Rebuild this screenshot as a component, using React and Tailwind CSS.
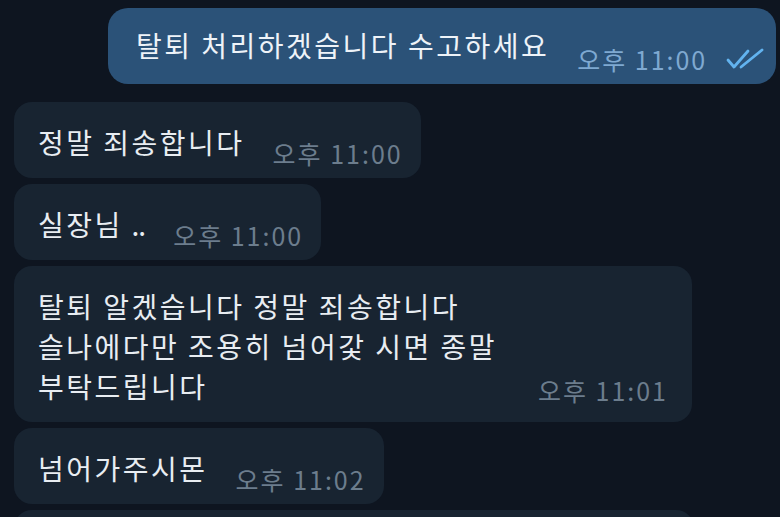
import React from "react";

const font = { fontFamily: '"Noto Sans CJK KR", "Noto Sans", sans-serif' };

function Time({ children, out }) {
  return (
    <span
      className={`text-[25px] leading-[30px] whitespace-nowrap tracking-[2px] ${out ? "text-[#7fa9d1]" : "text-[#6c7d8d]"}`}
    >
      {children}
    </span>
  );
}

function Bubble({ text, time }) {
  return (
    <div className="self-start flex items-end rounded-[18px] bg-[#182431] pl-6 pr-[18px] pt-[20px] pb-[9px]">
      <span className="text-[28px] leading-[40px] pb-[7px] text-[#e8edf2] whitespace-nowrap tracking-[2.5px]">
        {text}
      </span>
      <span className="ml-[28px]">
        <Time>{time}</Time>
      </span>
    </div>
  );
}

export default function App() {
  return (
    <div
      className="w-[780px] h-[517px] overflow-hidden bg-[#0e1520] flex flex-col pt-[8px]"
      style={font}
    >
      <div className="self-end mr-[4px] w-[668px] flex items-end rounded-[20px] bg-[#2b5278] pl-[28px] pt-[17px] pb-[9px]">
        <span className="text-[28px] leading-[40px] pb-[10px] text-[#eef3f8] whitespace-nowrap tracking-[2.5px]">
          탈퇴 처리하겠습니다 수고하세요
        </span>
        <span className="ml-[28px]">
          <Time out>오후 11:00</Time>
        </span>
        <svg
          className="ml-[18px] mb-[4px]"
          width="42"
          height="24"
          viewBox="0 0 42 24"
          fill="none"
          stroke="#62b3ef"
          strokeWidth="2.8"
          strokeLinecap="round"
          strokeLinejoin="round"
        >
          <path d="M3 13 L9 20 L23 4" />
          <path d="M16 20 L37 3" />
        </svg>
      </div>

      <div className="flex flex-col gap-[6px] pl-[14px] mt-[18px]">
        <Bubble text="정말 죄송합니다" time="오후 11:00" />
        <Bubble
          text={
            <>
              실장님 <span className="tracking-[-1px]">..</span>
            </>
          }
          time="오후 11:00"
        />
        <div className="self-start w-[678px] flex items-end rounded-[18px] bg-[#182431] pl-6 pr-6 pt-[20px] pb-[16px]">
          <div className="flex-1 text-[28px] leading-[40px] text-[#e8edf2] tracking-[2.5px]">
            <div>탈퇴 알겠습니다 정말 죄송합니다</div>
            <div>슬나에다만 조용히 넘어갗 시면 종말</div>
            <div>부탁드립니다</div>
          </div>
          <span>
            <Time>오후 11:01</Time>
          </span>
        </div>
        <Bubble text="넘어가주시몬" time="오후 11:02" />
        <div className="self-start w-[680px] h-[60px] rounded-[18px] bg-[#182431]" />
      </div>
    </div>
  );
}
